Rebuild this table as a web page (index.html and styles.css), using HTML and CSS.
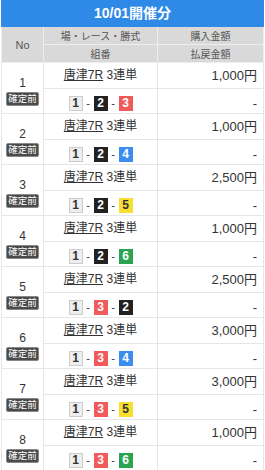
FILE: index.html
```html
<!DOCTYPE html>
<html lang="ja">
<head>
<meta charset="utf-8">
<link rel="stylesheet" href="styles.css">
</head>
<body>
<div class="wrap">
  <div class="title">10/01開催分</div>
  <table class="tbl">
    <colgroup><col class="c1"><col class="c2"><col class="c3"></colgroup>
    <thead>
      <tr><th rowspan="2" class="no">No</th><th>場・レース・勝式</th><th>購入金額</th></tr>
      <tr><th>組番</th><th>払戻金額</th></tr>
    </thead>
    <tbody>
      <tr class="r1"><td rowspan="2" class="num"><div class="n">1</div><span class="badge">確定前</span></td><td class="race"><a class="place">唐津7R</a> 3連単</td><td class="amt">1,000円</td></tr>
      <tr class="r2"><td class="combo"><span class="b b1">1</span><span class="sep">-</span><span class="b b2">2</span><span class="sep">-</span><span class="b b3">3</span></td><td class="amt">-</td></tr>
      <tr class="r1"><td rowspan="2" class="num"><div class="n">2</div><span class="badge">確定前</span></td><td class="race"><a class="place">唐津7R</a> 3連単</td><td class="amt">1,000円</td></tr>
      <tr class="r2"><td class="combo"><span class="b b1">1</span><span class="sep">-</span><span class="b b2">2</span><span class="sep">-</span><span class="b b4">4</span></td><td class="amt">-</td></tr>
      <tr class="r1"><td rowspan="2" class="num"><div class="n">3</div><span class="badge">確定前</span></td><td class="race"><a class="place">唐津7R</a> 3連単</td><td class="amt">2,500円</td></tr>
      <tr class="r2"><td class="combo"><span class="b b1">1</span><span class="sep">-</span><span class="b b2">2</span><span class="sep">-</span><span class="b b5">5</span></td><td class="amt">-</td></tr>
      <tr class="r1"><td rowspan="2" class="num"><div class="n">4</div><span class="badge">確定前</span></td><td class="race"><a class="place">唐津7R</a> 3連単</td><td class="amt">1,000円</td></tr>
      <tr class="r2"><td class="combo"><span class="b b1">1</span><span class="sep">-</span><span class="b b2">2</span><span class="sep">-</span><span class="b b6">6</span></td><td class="amt">-</td></tr>
      <tr class="r1"><td rowspan="2" class="num"><div class="n">5</div><span class="badge">確定前</span></td><td class="race"><a class="place">唐津7R</a> 3連単</td><td class="amt">2,500円</td></tr>
      <tr class="r2"><td class="combo"><span class="b b1">1</span><span class="sep">-</span><span class="b b3">3</span><span class="sep">-</span><span class="b b2">2</span></td><td class="amt">-</td></tr>
      <tr class="r1"><td rowspan="2" class="num"><div class="n">6</div><span class="badge">確定前</span></td><td class="race"><a class="place">唐津7R</a> 3連単</td><td class="amt">3,000円</td></tr>
      <tr class="r2"><td class="combo"><span class="b b1">1</span><span class="sep">-</span><span class="b b3">3</span><span class="sep">-</span><span class="b b4">4</span></td><td class="amt">-</td></tr>
      <tr class="r1"><td rowspan="2" class="num"><div class="n">7</div><span class="badge">確定前</span></td><td class="race"><a class="place">唐津7R</a> 3連単</td><td class="amt">3,000円</td></tr>
      <tr class="r2"><td class="combo"><span class="b b1">1</span><span class="sep">-</span><span class="b b3">3</span><span class="sep">-</span><span class="b b5">5</span></td><td class="amt">-</td></tr>
      <tr class="r1"><td rowspan="2" class="num"><div class="n">8</div><span class="badge">確定前</span></td><td class="race"><a class="place">唐津7R</a> 3連単</td><td class="amt">1,000円</td></tr>
      <tr class="r2"><td class="combo"><span class="b b1">1</span><span class="sep">-</span><span class="b b3">3</span><span class="sep">-</span><span class="b b6">6</span></td><td class="amt">-</td></tr>
    </tbody>
  </table>
</div>
</body>
</html>
```
FILE: styles.css
```css
html, body {
  margin: 0;
  padding: 0;
  background: #fff;
}
body {
  font-family: "Liberation Sans", "Noto Sans CJK JP", sans-serif;
  color: #333;
}
.wrap {
  margin: 0 1px;
}
.title {
  height: 27px;
  line-height: 27px;
  background: #2e8ae6;
  color: #fff;
  font-weight: bold;
  font-size: 14px;
  text-align: center;
}
.tbl {
  width: 100%;
  border-collapse: collapse;
  table-layout: fixed;
}
.c1 { width: 42px; }
.c2 { width: 114px; }
.c3 { width: auto; }
.tbl th {
  background: #d9d9d9;
  color: #555;
  font-weight: normal;
  font-size: 10px;
  height: 17px;
  padding: 0;
  border: 1px solid #eeeeee;
  border-top: 0;
  text-align: center;
  vertical-align: middle;
}
.tbl th.no {
  font-size: 11px;
}
.tbl td {
  border: 1px solid #e6e6e6;
  padding: 0;
  vertical-align: middle;
  line-height: 15px;
}
.r1 td { height: 25px; }
.r2 td { height: 20px; padding-top: 4px; }
.tbl td.num {
  text-align: center;
  font-size: 12px;
  padding-top: 5px;
}
.n {
  line-height: 14px;
  margin-bottom: 1px;
}
.badge {
  display: inline-block;
  background: #4a4a4a;
  color: #fff;
  font-size: 9.5px;
  line-height: 12px;
  padding: 0 1px;
  border-radius: 2px;
  border: 1px solid #888;
}
.race {
  text-align: center;
  font-size: 12px;
}
.place {
  text-decoration: underline;
  color: #333;
}
.combo {
  text-align: center;
  font-size: 0;
}
.b {
  display: inline-block;
  width: 14px;
  height: 15px;
  line-height: 15px;
  font-size: 12px;
  font-weight: bold;
  text-align: center;
  vertical-align: top;
  box-sizing: border-box;
}
.sep {
  display: inline-block;
  width: 11px;
  font-size: 11px;
  line-height: 15px;
  text-align: center;
  vertical-align: top;
  color: #333;
}
.b1 { background: #eeeeee; border: 1px solid #cccccc; color: #333; line-height: 13px; }
.b2 { background: #222222; color: #fff; }
.b3 { background: #f05a5a; color: #fff; }
.b4 { background: #3b8ef0; color: #fff; }
.b5 { background: #f7de30; color: #333; }
.b6 { background: #2aa451; color: #fff; }
.amt {
  text-align: right;
  padding-right: 6px !important;
  font-size: 13px;
}
```
